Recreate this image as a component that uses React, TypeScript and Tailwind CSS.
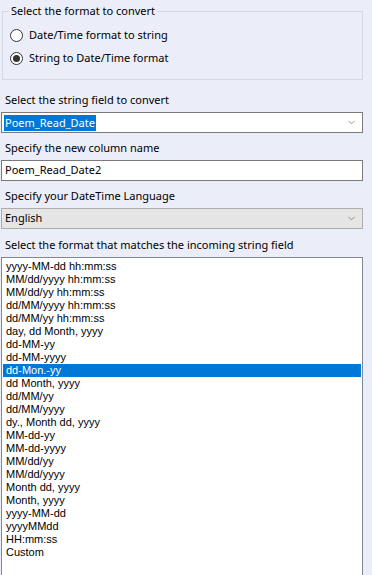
import { ChevronDown } from 'lucide-react';

const formats = [
    'yyyy-MM-dd hh:mm:ss',
    'MM/dd/yyyy hh:mm:ss',
    'MM/dd/yy hh:mm:ss',
    'dd/MM/yyyy hh:mm:ss',
    'dd/MM/yy hh:mm:ss',
    'day, dd Month, yyyy',
    'dd-MM-yy',
    'dd-MM-yyyy',
    'dd-Mon.-yy',
    'dd Month, yyyy',
    'dd/MM/yy',
    'dd/MM/yyyy',
    'dy., Month dd, yyyy',
    'MM-dd-yy',
    'MM-dd-yyyy',
    'MM/dd/yy',
    'MM/dd/yyyy',
    'Month dd, yyyy',
    'Month, yyyy',
    'yyyy-MM-dd',
    'yyyyMMdd',
    'HH:mm:ss',
    'Custom',
];

const selected = 'dd-Mon.-yy';

function Radio({ checked, label }: { checked?: boolean; label: string }) {
    return (
        <div className="flex items-center h-[23px] pl-[7px]">
            <span className="w-[13px] h-[13px] rounded-full border border-[#333] bg-white flex items-center justify-center">
                {checked && <span className="w-[7px] h-[7px] rounded-full bg-[#333]" />}
            </span>
            <span className="ml-[6px]">{label}</span>
        </div>
    );
}

function Label({ children }: { children: string }) {
    return <div className="h-[20px] leading-[16px] pl-[4px]">{children}</div>;
}

export default function App() {
    return (
        <div
            className="w-[372px] h-[575px] overflow-hidden bg-[#ebeef8] text-[11px] text-black"
            style={{ fontFamily: '"Noto Sans", "Open Sans", sans-serif' }}
        >
            <div className="w-[363px]">
                {/* Format group */}
                <fieldset className="ml-[2px] mt-[4px] h-[76px] border border-[#d4d8e0] pt-[6px]">
                    <legend className="ml-[6px] px-[2px] leading-[14px]">Select the format to convert</legend>
                    <Radio label="Date/Time format to string" />
                    <Radio checked label="String to Date/Time format" />
                </fieldset>

                <div className="pt-[12px] pl-[1px]">
                    <Label>Select the string field to convert</Label>
                    <div className="h-[21px] bg-white border border-[#7a7a7a] flex items-center justify-between pl-[2px] pr-[5px]">
                        <span className="bg-[#0078d7] text-white leading-[16px] px-[1px]">Poem_Read_Date</span>
                        <ChevronDown size={11} strokeWidth={1.3} className="text-[#555]" />
                    </div>

                    <div className="h-[7px]" />
                    <Label>Specify the new column name</Label>
                    <div className="h-[21px] bg-white border border-[#7a7a7a] flex items-center pl-[3px]">
                        Poem_Read_Date2
                    </div>

                    <div className="h-[7px]" />
                    <Label>Specify your DateTime Language</Label>
                    <div className="h-[21px] bg-[#e5e5e5] border border-[#adadad] flex items-center justify-between pl-[3px] pr-[5px]">
                        <span>English</span>
                        <ChevronDown size={11} strokeWidth={1.3} className="text-[#555]" />
                    </div>

                    <div className="h-[8px]" />
                    <Label>Select the format that matches the incoming string field</Label>
                    <div
                        className="h-[330px] bg-white border border-[#828790] pt-[2px] px-[1px] text-[11px]"
                        style={{ fontFamily: '"Liberation Sans", Arial, sans-serif' }}
                    >
                        {formats.map((f) => (
                            <div
                                key={f}
                                className={
                                    f === selected
                                        ? 'h-[13px] leading-[13px] pl-[3px] bg-[#0078d7] text-white'
                                        : 'h-[13px] leading-[13px] pl-[3px]'
                                }
                            >
                                {f}
                            </div>
                        ))}
                    </div>
                </div>
            </div>
        </div>
    );
}
